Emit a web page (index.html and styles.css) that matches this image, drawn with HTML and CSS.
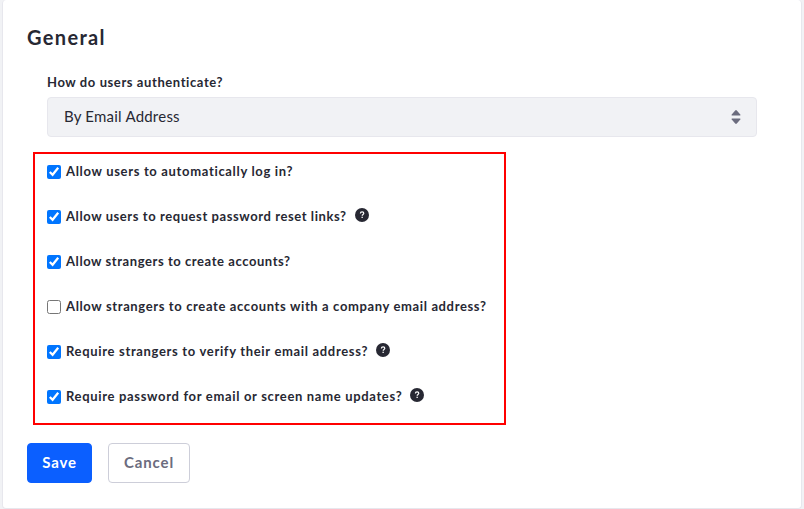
FILE: index.html
```html
<!DOCTYPE html>
<html lang="en">
<head>
<meta charset="utf-8">
<title>General</title>
<link rel="stylesheet" href="styles.css">
</head>
<body>
<svg class="symbols" aria-hidden="true">
  <symbol id="help" viewBox="0 0 14 14">
    <circle cx="7" cy="7" r="7" fill="#272833"/>
    <path d="M5.4 5.5c0-1 .7-1.6 1.7-1.6s1.7.6 1.7 1.4c0 1.2-1.6 1.1-1.6 2.4" fill="none" stroke="#fff" stroke-width="1.2"/>
    <rect x="6.5" y="8.7" width="1.3" height="1.3" fill="#fff"/>
  </symbol>
</svg>
<form class="card">
  <h1>General</h1>
  <div class="field">
    <label class="field-label" for="auth">How do users authenticate?</label>
    <div class="select" id="auth">
      <span>By Email Address</span>
      <svg class="caret" viewBox="0 0 10 14"><path d="M4.2.5Q5-.4 5.8.5L9.3 4.4Q10 5.5 9 5.5H1Q0 5.5.7 4.4ZM1 8.5H9Q10 8.5 9.3 9.6L5.8 13.5Q5 14.4 4.2 13.5L.7 9.6Q0 8.5 1 8.5Z" fill="#6b6c7e"/></svg>
    </div>
  </div>
  <div class="options">
    <label class="option"><input type="checkbox" checked><span class="login">Allow users to automatically log in?</span></label>
    <label class="option"><input type="checkbox" checked><span class="reset">Allow users to request password reset links?</span><svg class="help"><use href="#help"/></svg></label>
    <label class="option"><input type="checkbox" checked><span class="accounts">Allow strangers to create accounts?</span></label>
    <label class="option"><input type="checkbox"><span class="company">Allow strangers to create accounts with a company email address?</span></label>
    <label class="option"><input type="checkbox" checked><span class="verify">Require strangers to verify their email address?</span><svg class="help"><use href="#help"/></svg></label>
    <label class="option"><input type="checkbox" checked><span class="updates">Require password for email or screen name updates?</span><svg class="help"><use href="#help"/></svg></label>
  </div>
  <div class="actions">
    <button type="button" class="btn primary">Save</button>
    <button type="button" class="btn secondary">Cancel</button>
  </div>
</form>
</body>
</html>
```
FILE: styles.css
```css
* { box-sizing: border-box; }
body {
  margin: 0;
  height: 509px;
  overflow: hidden;
  padding: 0 2px;
  background: #f1f2f5;
  color: #272833;
  font-family: Lato, "Open Sans", sans-serif;
}
.symbols { display: none; }
.card {
  height: 509px;
  padding: 24px 24px 0;
  background: #fff;
  border: 1px solid #e7e7ed;
  border-top: 0;
  border-radius: 4px;
}
h1 {
  margin: 0;
  font-size: 20px;
  line-height: 26px;
  letter-spacing: 1.35px;
  font-weight: 700;
}
.field { margin: 22px 20px 0; }
.field-label {
  display: block;
  height: 25px;
  font-size: 13px;
  line-height: 20px;
  font-weight: 700;
  letter-spacing: .59px;
}
.select {
  display: flex;
  align-items: center;
  justify-content: space-between;
  height: 40px;
  padding: 0 15px 0 16px;
  background: #f1f2f5;
  border: 1px solid #e7e7ed;
  border-radius: 4px;
  font-size: 15px;
  letter-spacing: .22px;
}
.select span { padding-bottom: 2px; }
.caret { width: 10px; height: 14px; }
.options {
  width: 473px;
  height: 273px;
  margin: 15px 0 0 6px;
  padding: 10px 0 0 12px;
  border: 2px solid #f00;
}
.option {
  display: flex;
  align-items: center;
  height: 16px;
  margin-bottom: 29px;
  font-size: 13px;
  line-height: 16px;
  font-weight: 700;
  white-space: nowrap;
}
.option span { padding-bottom: 2px; }
.option input {
  width: 14px;
  height: 14px;
  margin: 0 5px 0 0;
  accent-color: #0075ff;
}
.login { letter-spacing: .67px; }
.reset { letter-spacing: .58px; }
.accounts { letter-spacing: .57px; }
.company { letter-spacing: .63px; }
.verify { letter-spacing: .67px; }
.updates { letter-spacing: .67px; }
.help {
  width: 14px;
  height: 14px;
  margin: 0 0 4px 8px;
}
.actions { display: flex; gap: 16px; margin-top: 18px; }
.btn {
  height: 40px;
  padding: 0 0 2px;
  border-radius: 4px;
  font: 700 15px/20px Lato, "Open Sans", sans-serif;
  letter-spacing: .85px;
}
.primary { width: 65px; color: #fff; background: #0b5fff; border: 1px solid #0b5fff; }
.secondary { width: 82px; color: #6b6c7e; background: #fff; border: 1px solid #cdced9; }
```
